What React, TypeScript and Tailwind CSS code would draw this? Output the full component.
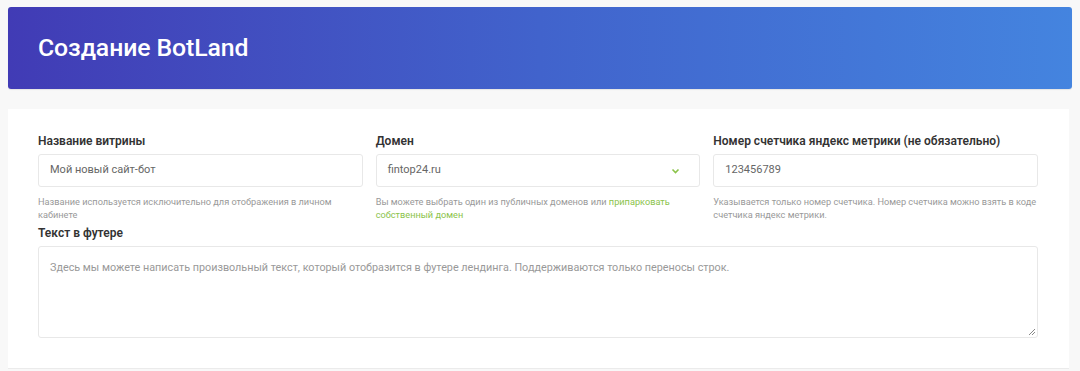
import React from "react";

export default function App() {
  return (
    <div className="w-[1080px] h-[371px] bg-[#f8f8f8] overflow-hidden font-['Roboto',sans-serif] pt-[7px] px-[8px]">
      <div className="h-[82px] rounded-[3px] bg-gradient-to-r from-[#413bb5] via-[#4163cc] to-[#4484df] flex items-center pl-[30px] shadow-[0_1px_1px_rgba(0,0,0,0.08)]">
        <h1 className="text-white text-[24.8px] font-medium leading-none tracking-[-0.1px]">Создание BotLand</h1>
      </div>
      <div className="mt-[20px] w-[1061px] h-[260px] bg-white border-b border-[#ebebeb] px-[30px] pt-[24px]">
        <div className="grid grid-cols-3 gap-x-[13px] w-[1000px]">
          <Field label="Название витрины" value="Мой новый сайт-бот">
            Название используется исключительно для отображения в личном кабинете
          </Field>
          <Field label="Домен" value="fintop24.ru" select>
            Вы можете выбрать один из публичных доменов или{" "}
            <span className="text-[#8bc34a]">припарковать собственный домен</span>
          </Field>
          <Field label="Номер счетчика яндекс метрики (не обязательно)" value="123456789">
            Указывается только номер счетчика. Номер счетчика можно взять в коде счетчика яндекс метрики.
          </Field>
        </div>
        <div className="mt-[4px] w-[1000px]">
          <label className="block text-[12px] font-semibold text-[#333] leading-[16px]">Текст в футере</label>
          <div className="relative mt-[5px] h-[92px] border border-[#e8e8e8] rounded-[3px] px-[11px] pt-[7px]">
            <span className="text-[10.8px] text-[#999] leading-[14px]">
              Здесь мы можете написать произвольный текст, который отобразится в футере лендинга. Поддерживаются только переносы строк.
            </span>
            <svg className="absolute right-[1px] bottom-[1px]" width="9" height="9" viewBox="0 0 9 9">
              <path d="M8 2 L2 8 M8 5 L5 8" stroke="#888" strokeWidth="1" />
            </svg>
          </div>
        </div>
      </div>
    </div>
  );
}

function Field({
  label,
  value,
  select,
  children,
}: {
  label: string;
  value: string;
  select?: boolean;
  children: React.ReactNode;
}) {
  return (
    <div>
      <label className="block text-[12px] font-semibold text-[#333] leading-[16px]">{label}</label>
      <div className="mt-[5px] h-[33px] border border-[#e8e8e8] rounded-[3px] px-[11px] flex items-center justify-between">
        <span className="text-[11px] text-[#666]">{value}</span>
        {select && (
          <svg width="9" height="6" viewBox="0 0 9 6" className="mr-[8px]">
            <path d="M1.5 1.5 L4.5 4.5 L7.5 1.5" stroke="#8bc34a" strokeWidth="1.6" fill="none" />
          </svg>
        )}
      </div>
      <p className="mt-[8px] text-[9.2px] leading-[13px] text-[#999]">{children}</p>
    </div>
  );
}
